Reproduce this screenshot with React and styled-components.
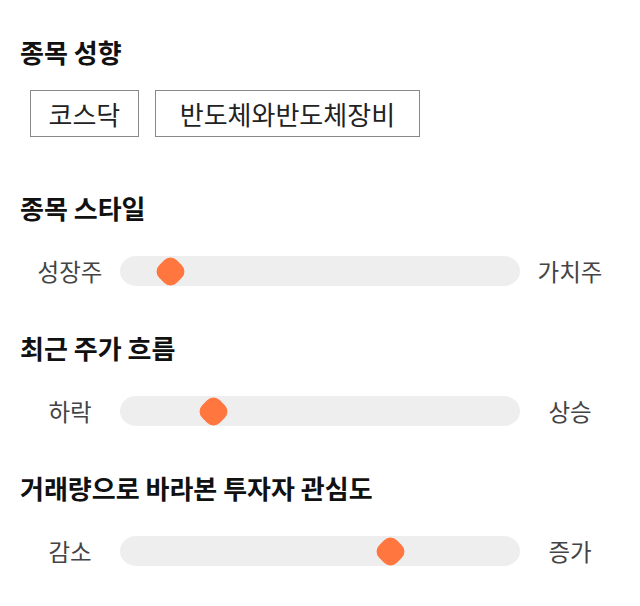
import React from 'react';
import styled, { createGlobalStyle } from 'styled-components';

const Global = createGlobalStyle`
  body {
    margin: 0;
    background: #fff;
    font-family: "Noto Sans CJK KR", "Noto Sans", sans-serif;
  }
`;

const Page = styled.div`
  width: 600px;
  padding: 35px 20px 0;
`;

const Title = styled.h2`
  margin: 0;
  font-size: 26px;
  font-weight: 700;
  line-height: 34px;
  color: #111;
`;

const TagList = styled.div`
  display: flex;
  gap: 16px;
  margin: 21px 0 54px 10px;
`;

const Tag = styled.div`
  height: 47px;
  box-sizing: border-box;
  border: 1px solid #888;
  padding: 0 ${p => p.$pad}px;
  display: flex;
  align-items: center;
  font-size: 26px;
  color: #222;
`;

const SliderRow = styled.div`
  display: grid;
  grid-template-columns: 100px 1fr 100px;
  align-items: center;
  height: 30px;
  margin: 31px 0 45px;
`;

const Label = styled.span`
  text-align: center;
  font-size: 23.5px;
  line-height: 30px;
  color: #444;
`;

const Track = styled.div`
  position: relative;
  height: 30px;
  border-radius: 16px / 15px;
  background: #eee;
`;

const Thumb = styled.div`
  position: absolute;
  top: 1px;
  width: 28px;
  height: 28px;
  display: flex;
  align-items: center;
  justify-content: center;
  &::before {
    content: '';
    flex: none;
    width: 25px;
    height: 25px;
    border-radius: 9px;
    background: #ff763f;
    transform: rotate(45deg);
  }
`;

const sliders = [
  { title: '종목 스타일', left: '성장주', right: '가치주', value: 9.7 },
  { title: '최근 주가 흐름', left: '하락', right: '상승', value: 21.4 },
  { title: '거래량으로 바라본 투자자 관심도', left: '감소', right: '증가', value: 68.9 },
];

function Slider({ left, right, value }) {
  return (
    <SliderRow>
      <Label>{left}</Label>
      <Track>
        <Thumb style={{ left: `calc((100% - 28px) * ${value} / 100)` }} />
      </Track>
      <Label>{right}</Label>
    </SliderRow>
  );
}

export default function App() {
  return (
    <Page>
      <Global />
      <Title>종목 성향</Title>
      <TagList>
        <Tag $pad={17.5}>코스닥</Tag>
        <Tag $pad={24}>반도체와반도체장비</Tag>
      </TagList>
      {sliders.map(s => (
        <section key={s.title}>
          <Title>{s.title}</Title>
          <Slider left={s.left} right={s.right} value={s.value} />
        </section>
      ))}
    </Page>
  );
}
